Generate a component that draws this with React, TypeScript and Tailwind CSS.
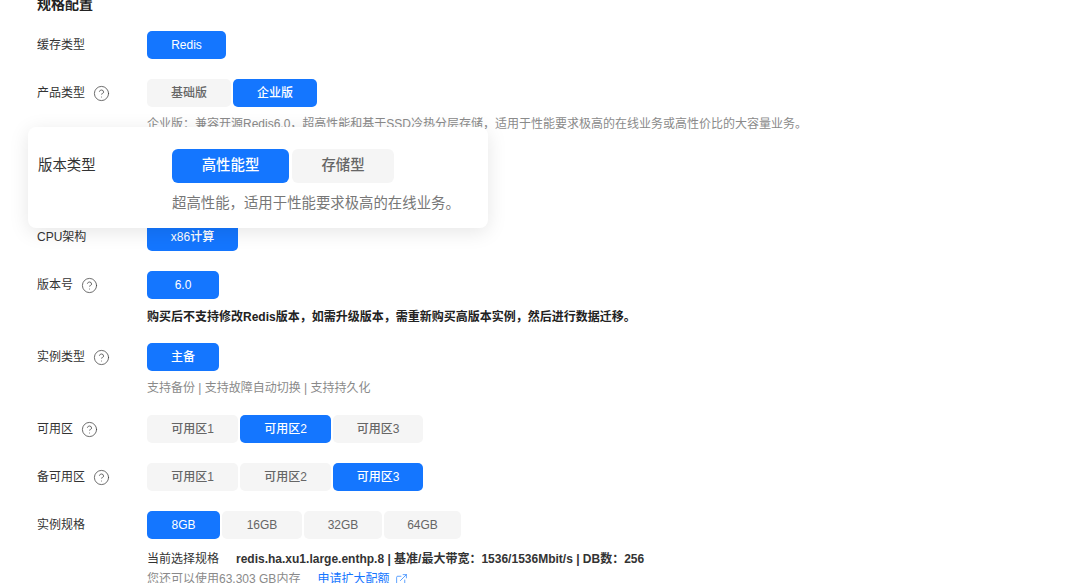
import { CircleHelp, ExternalLink } from "lucide-react";

function Opt({ label, width, active }: { label: string; width: string; active?: boolean }) {
  return (
    <button
      type="button"
      className={`h-7 rounded-[5px] text-xs font-medium ${width} ${
        active ? "bg-[#1476ff] text-white" : "bg-[#f5f5f5] text-[#666666]"
      }`}
    >
      {label}
    </button>
  );
}

function Row({
  label,
  help,
  note,
  children,
}: {
  label: string;
  help?: boolean;
  note?: React.ReactNode;
  children: React.ReactNode;
}) {
  return (
    <div className="mb-5 flex">
      <div className="flex h-7 w-[110px] shrink-0 items-center gap-2 text-[#333333]">
        <span>{label}</span>
        {help && <CircleHelp className="h-[17px] w-[17px] text-[#444444]" strokeWidth={1.1} />}
      </div>
      <div>
        <div className="flex gap-[2px]">{children}</div>
        {note}
      </div>
    </div>
  );
}

function Hint({ children, className }: { children: React.ReactNode; className?: string }) {
  return <p className={`mt-2 h-4 whitespace-nowrap leading-[18px] text-[#8a8a8a] ${className ?? ""}`}>{children}</p>;
}

export default function App() {
  return (
    <div className="relative h-[583px] overflow-hidden bg-white pl-[37px] text-xs font-['Liberation_Sans','Noto_Sans_CJK_SC',sans-serif]">
      <h2 className="mt-[-5px] mb-[22px] h-[14px] text-sm font-bold leading-[18px] text-[#222222]">规格配置</h2>

      <Row label="缓存类型">
        <Opt label="Redis" width="w-[79px]" active />
      </Row>
      <Row label="产品类型" help note={<Hint>企业版：兼容开源Redis6.0，超高性能和基于SSD冷热分层存储，适用于性能要求极高的在线业务或高性价比的大容量业务。</Hint>}>
        <Opt label="基础版" width="w-[84px]" />
        <Opt label="企业版" width="w-[84px]" active />
      </Row>
      <Row label="版本类型" note={<Hint>超高性能，适用于性能要求极高的在线业务。</Hint>}>
        <Opt label="高性能型" width="w-[97px]" active />
        <Opt label="存储型" width="w-[85px]" />
      </Row>
      <Row label="CPU架构">
        <Opt label="x86计算" width="w-[91px]" active />
      </Row>
      <Row
        label="版本号"
        help
        note={<p className="mt-2 h-4 whitespace-nowrap font-bold leading-5 text-[#222222]">购买后不支持修改Redis版本，如需升级版本，需重新购买高版本实例，然后进行数据迁移。</p>}
      >
        <Opt label="6.0" width="w-[72px]" active />
      </Row>
      <Row label="实例类型" help note={<Hint>支持备份 | 支持故障自动切换 | 支持持久化</Hint>}>
        <Opt label="主备" width="w-[72px]" active />
      </Row>
      <Row label="可用区" help>
        <Opt label="可用区1" width="w-[91px]" />
        <Opt label="可用区2" width="w-[91px]" active />
        <Opt label="可用区3" width="w-[90px]" />
      </Row>
      <Row label="备可用区" help>
        <Opt label="可用区1" width="w-[91px]" />
        <Opt label="可用区2" width="w-[91px]" />
        <Opt label="可用区3" width="w-[90px]" active />
      </Row>
      <Row
        label="实例规格"
        note={
          <>
            <p className="mt-[11px] h-[14px] whitespace-nowrap leading-[18px] text-[#333333]">
              当前选择规格
              <span className="ml-[17px] font-bold text-[#333333]">
                redis.ha.xu1.large.enthp.8 | 基准/最大带宽：1536/1536Mbit/s | DB数：256
              </span>
            </p>
            <p className="mt-[7px] flex h-4 items-center whitespace-nowrap text-[#8a8a8a]">
              您还可以使用63,303 GB内存
              <span className="ml-[17px] text-[#1476ff]">申请扩大配额</span>
              <ExternalLink className="ml-[6px] h-[13px] w-[13px] text-[#1476ff]" strokeWidth={1.25} />
            </p>
          </>
        }
      >
        <Opt label="8GB" width="w-[73px]" active />
        <Opt label="16GB" width="w-[80px]" />
        <Opt label="32GB" width="w-[78px]" />
        <Opt label="64GB" width="w-[77px]" />
      </Row>

      {/* highlighted version-type callout sits over the form */}
      <div className="absolute left-[28px] top-[127px] h-[101px] w-[460px] rounded-lg bg-white pl-[10px] pt-[22px] shadow-[0_4px_20px_rgba(0,0,0,0.1)]">
        <div className="flex">
          <div className="flex h-[34px] w-[134px] shrink-0 items-center text-[14.4px] text-[#333333]">版本类型</div>
          <div>
            <div className="flex gap-[3px]">
              <button type="button" className="h-[34px] w-[117px] rounded-md bg-[#1476ff] text-[14.4px] font-medium text-white">
                高性能型
              </button>
              <button type="button" className="h-[34px] w-[102px] rounded-md bg-[#f5f5f5] text-[14.4px] font-medium text-[#666666]">
                存储型
              </button>
            </div>
            <p className="mt-[10px] whitespace-nowrap text-[14.4px] leading-5 text-[#777777]">超高性能，适用于性能要求极高的在线业务。</p>
          </div>
        </div>
      </div>
    </div>
  );
}
